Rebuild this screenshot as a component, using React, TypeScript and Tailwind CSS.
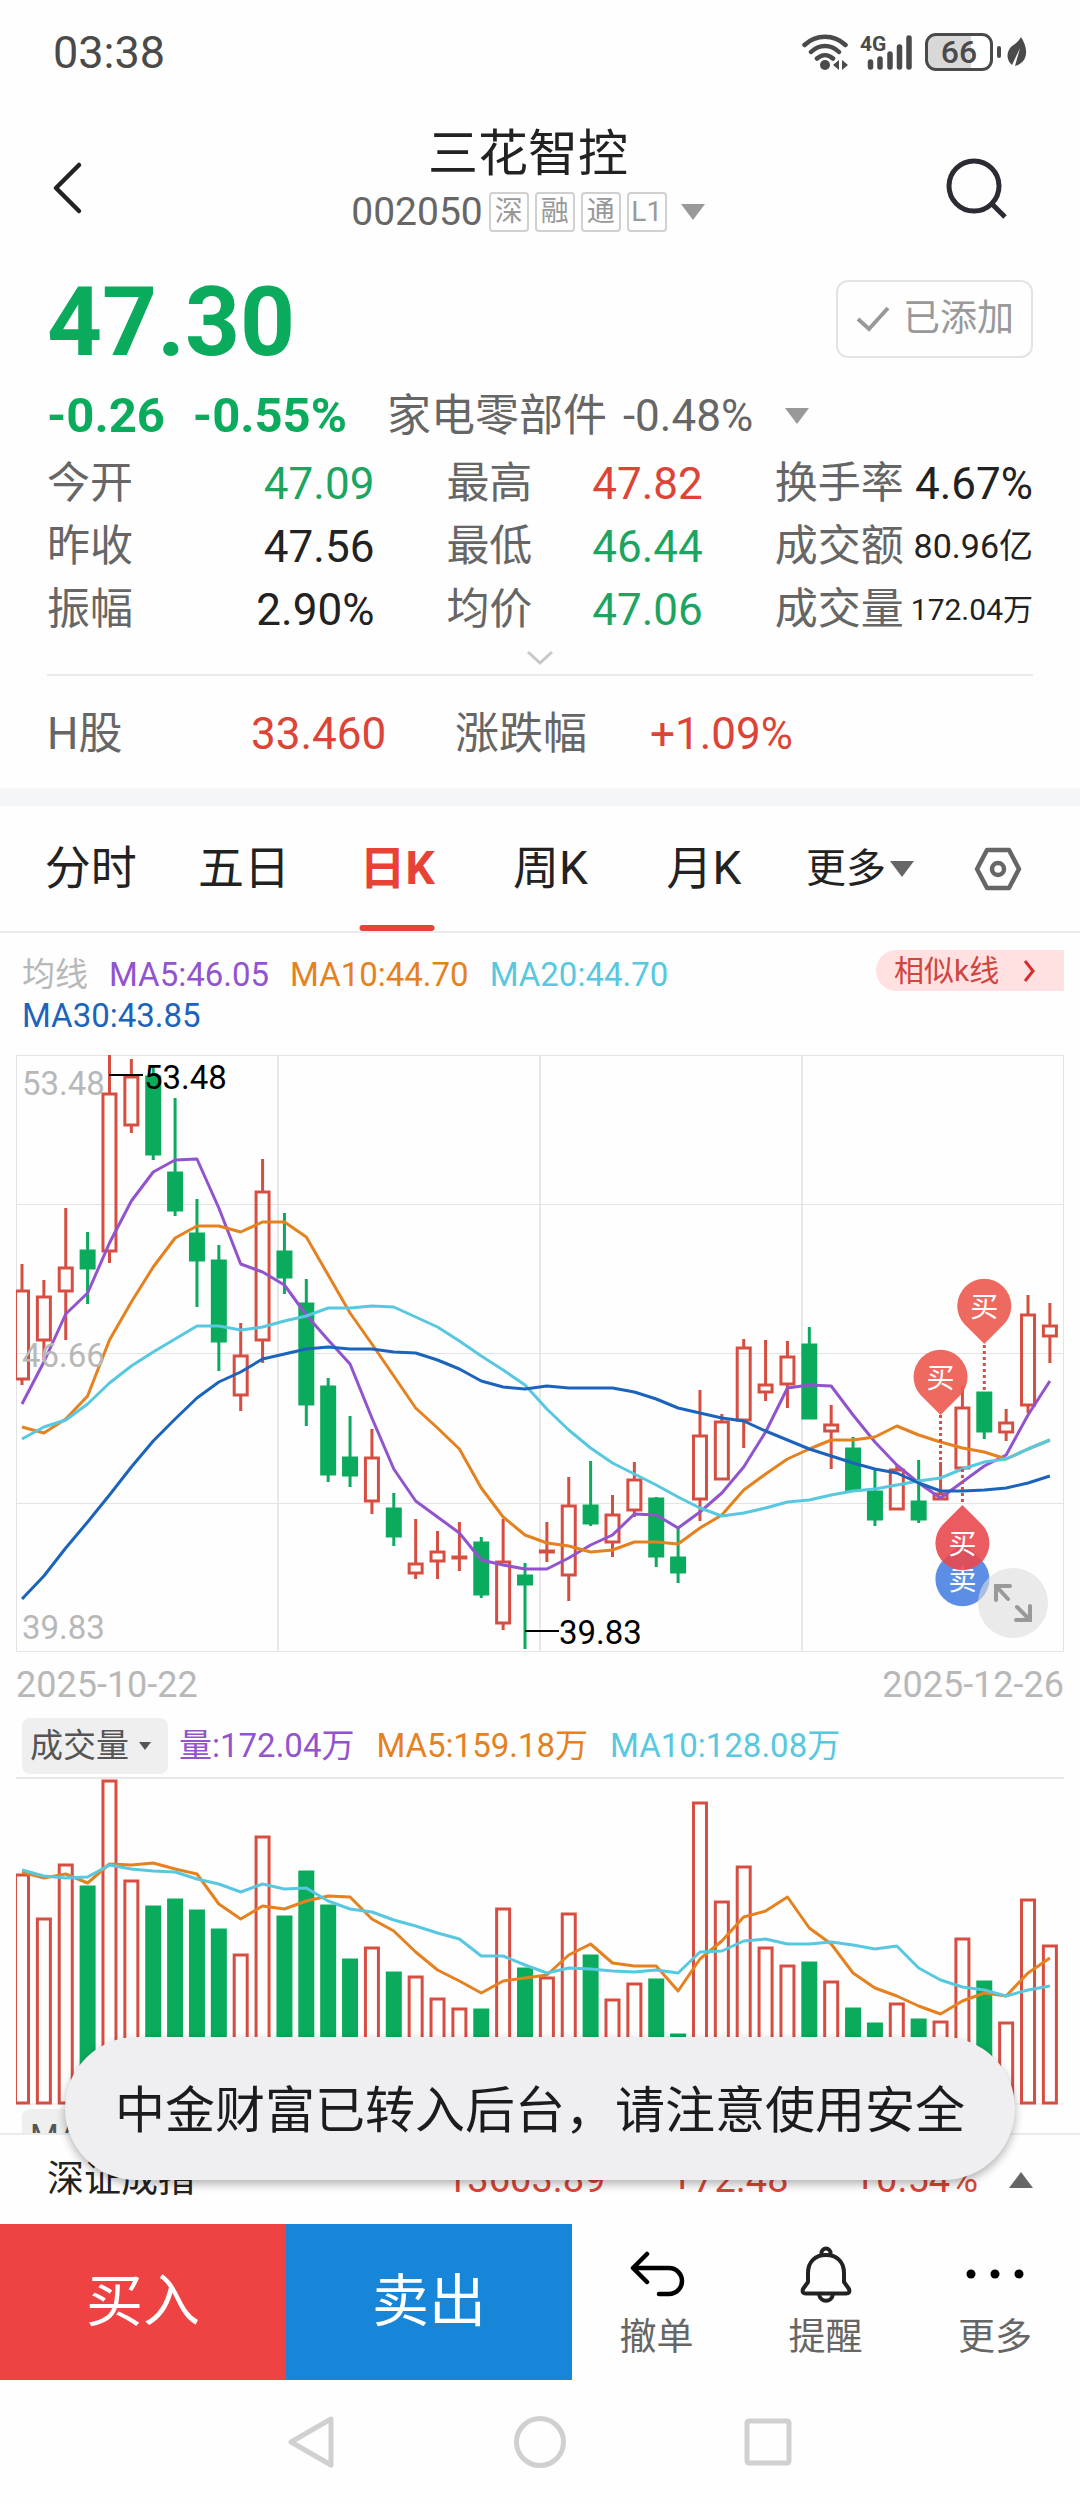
import React from "react";

// one trading day on the price chart: [high, body top, body bottom, low, rising]
type Candle = [number, number, number, number, 0 | 1];

const STEP = 21.87;
const xAt = (i: number) => 6 + i * STEP;

const candles: Candle[] = [
  [209, 235, 324, 330, 1], [225, 241, 285, 305, 1], [153, 212, 236, 285, 1], [177, 195, 213, 249, 0],
  [0, 38, 196, 208, 1], [4, 21, 70, 78, 1], [11, 21, 99, 105, 0], [43, 117, 155, 161, 0],
  [144, 178, 205, 252, 0], [190, 205, 286, 316, 0], [268, 300, 340, 356, 1], [104, 136, 285, 308, 1],
  [158, 196, 222, 239, 0], [224, 248, 349, 371, 0], [323, 331, 419, 427, 0], [361, 402, 420, 432, 0],
  [374, 402, 446, 459, 1], [438, 453, 481, 491, 0], [464, 508, 518, 524, 1], [476, 496, 506, 524, 1],
  [467, 501, 502, 516, 1], [482, 487, 539, 543, 0], [464, 506, 568, 575, 1], [508, 520, 529, 594, 0],
  [467, 495, 496, 507, 1], [422, 450, 520, 546, 1], [406, 450, 468, 471, 0], [440, 459, 487, 502, 1],
  [407, 424, 455, 462, 1], [442, 443, 501, 512, 0], [473, 502, 517, 528, 0], [335, 380, 444, 466, 1],
  [359, 366, 424, 424, 1], [284, 292, 365, 393, 1], [285, 329, 337, 346, 1], [286, 301, 329, 353, 1],
  [272, 289, 363, 364, 0], [350, 369, 376, 414, 1], [382, 393, 435, 435, 0], [413, 436, 464, 471, 0],
  [410, 414, 454, 455, 1], [405, 446, 464, 468, 0], [407, 438, 444, 444, 1], [331, 352, 413, 413, 1],
  [337, 337, 376, 384, 0], [354, 367, 377, 386, 1], [240, 259, 350, 358, 1], [248, 270, 281, 308, 1],
];

const ma5 = [349, 307, 259, 238, 188, 146, 117, 105, 104, 153, 209, 217, 230, 260, 285, 309, 363, 414, 446, 462, 478, 505, 510, 514, 514, 503, 490, 480, 459, 460, 473, 457, 438, 412, 377, 333, 330, 331, 360, 387, 410, 428, 443, 427, 411, 400, 360, 326];
const ma10 = [372, 378, 364, 341, 285, 247, 212, 183, 171, 171, 177, 167, 167, 182, 220, 258, 289, 321, 353, 373, 394, 433, 462, 480, 488, 491, 497, 495, 487, 487, 489, 473, 460, 435, 419, 404, 394, 385, 385, 382, 371, 380, 387, 393, 397, 404, 394, 385];
const ma20 = [384, 372, 365, 349, 328, 311, 297, 284, 271, 271, 275, 272, 266, 261, 253, 253, 251, 252, 262, 272, 286, 301, 315, 330, 354, 375, 393, 408, 419, 430, 442, 453, 461, 458, 453, 447, 445, 440, 436, 434, 430, 426, 423, 414, 407, 404, 394, 385];
const ma30 = [544, 521, 493, 467, 440, 412, 386, 364, 343, 327, 317, 304, 299, 294, 292, 294, 294, 297, 298, 305, 314, 326, 332, 334, 331, 333, 333, 333, 337, 344, 353, 358, 363, 366, 376, 385, 394, 401, 408, 414, 418, 428, 436, 436, 435, 433, 428, 421];

const volumes = [97, 141, 87, 109, 3, 103, 129, 122, 133, 152, 177, 59, 139, 94, 128, 182, 170, 195, 199, 221, 231, 232, 131, 191, 200, 136, 178, 222, 206, 202, 257, 25, 124, 89, 170, 188, 185, 204, 231, 246, 226, 242, 244, 161, 204, 245, 122, 168];
const volMa5 = [95, 101, 97, 106, 87, 88, 86, 92, 97, 127, 142, 129, 132, 124, 119, 120, 142, 154, 175, 193, 204, 216, 204, 201, 198, 178, 167, 186, 189, 189, 214, 182, 164, 140, 134, 120, 151, 167, 196, 211, 219, 229, 237, 224, 216, 219, 196, 181];
const volMa10 = [93, 99, 101, 100, 88, 92, 94, 95, 102, 107, 115, 107, 112, 111, 124, 132, 135, 143, 149, 156, 162, 179, 179, 188, 196, 191, 192, 194, 195, 193, 196, 175, 174, 164, 162, 167, 167, 165, 168, 172, 169, 191, 203, 210, 213, 219, 213, 209];

const RED = "#d64e41";
const GREEN = "#0aab5c";

const toPoints = (ys: number[]) => ys.map((y, i) => `${xAt(i)},${y}`).join(" ");

function Line({ ys, color }: { ys: number[]; color: string }) {
  return <polyline points={toPoints(ys)} fill="none" stroke={color} strokeWidth="3" strokeLinejoin="round" />;
}

function Pin({ day, y, label, color, up = false }: { day: number; y: number; label: string; color: string; up?: boolean }) {
  const x = xAt(day);
  const d = up
    ? `M${x} ${y - 38} L${x + 20} ${y - 18} A27 27 0 1 1 ${x - 20} ${y - 18} Z`
    : `M${x} ${y + 38} L${x + 20} ${y + 18} A27 27 0 1 0 ${x - 20} ${y + 18} Z`;
  return (
    <g>
      <path d={d} fill={color} opacity="0.9" />
      <text x={x} y={y + 11} fontSize="28" fill="#fff" textAnchor="middle">{label}</text>
    </g>
  );
}

function PriceChart() {
  return (
    <svg viewBox="0 0 1048 597" className="block w-full" role="img" aria-label="日K">
      <g stroke="#e4e4e4" strokeWidth="1" shapeRendering="crispEdges">
        <rect x="0.5" y="0.5" width="1047" height="596" fill="none" />
        {[149, 298, 448].map((y) => <line key={y} x1="0" x2="1048" y1={y} y2={y} />)}
        {[262, 524, 786].map((x) => <line key={x} x1={x} x2={x} y1="0" y2="597" stroke="#e8e8e8" strokeWidth="2" />)}
      </g>
      {candles.map(([high, top, bottom, low, up], i) => (
        <g key={i} stroke={up ? RED : GREEN} strokeWidth="3">
          <line x1={xAt(i)} x2={xAt(i)} y1={high} y2={top} />
          <line x1={xAt(i)} x2={xAt(i)} y1={bottom} y2={low} />
          <rect x={xAt(i) - 6.5} y={top + 1} width="13" height={Math.max(bottom - top - 1, 1)} fill={up ? "none" : GREEN} />
        </g>
      ))}
      <Line ys={ma5} color="#9254ce" />
      <Line ys={ma10} color="#e5811f" />
      <Line ys={ma20} color="#58c8e0" />
      <Line ys={ma30} color="#1c64bb" />
      <g fontSize="33" fill="#b8b8b8">
        <text x="6" y="40">53.48</text>
        <text x="6" y="312">46.66</text>
        <text x="6" y="584">39.83</text>
      </g>
      <g fontSize="33" fill="#000">
        <path d="M93 20H127M509 576H543" stroke="#000" strokeWidth="2" />
        <text x="128" y="34">53.48</text>
        <text x="543" y="589">39.83</text>
      </g>
      <g stroke={RED} strokeWidth="3" strokeDasharray="3 3">
        <line x1={xAt(42)} x2={xAt(42)} y1="360" y2="407" />
        <line x1={xAt(44)} x2={xAt(44)} y1="290" y2="337" />
        <line x1={xAt(43)} x2={xAt(43)} y1="414" y2="450" />
      </g>
      <Pin day={42} y={322} label="买" color="#ec5a50" />
      <Pin day={44} y={251} label="买" color="#ec5a50" />
      <Pin day={43} y={524} label="卖" color="#4b82e2" up />
      <Pin day={43} y={488} label="买" color="#e84a4e" up />
    </svg>
  );
}

function VolumeChart() {
  return (
    <svg viewBox="0 0 1048 328" className="block w-full" role="img" aria-label="成交量">
      <path d="M0 1H1048" stroke="#e8e8e8" strokeWidth="2" />
      <path d="M0 327H1048" stroke="#e8e8e8" strokeWidth="1" />
      {volumes.map((top, i) => {
        const up = candles[i][4];
        return (
          <rect key={i} x={xAt(i) - 6.5} y={top + 1} width="13" height={325 - top} fill={up ? "none" : GREEN} stroke={up ? RED : GREEN} strokeWidth="3" />
        );
      })}
      <Line ys={volMa5} color="#e5811f" />
      <Line ys={volMa10} color="#58c8e0" />
    </svg>
  );
}

function Caret({ className, up = false }: { className: string; up?: boolean }) {
  return (
    <svg viewBox="0 0 24 16" className={className} fill="currentColor" aria-hidden="true">
      <path d={up ? "M12 0L24 16H0Z" : "M0 0H24L12 16Z"} />
    </svg>
  );
}

function StatusBar() {
  return (
    <div className="flex h-[104px] items-center justify-between pl-[53px] pr-[53px] text-[#4a4a4a]">
      <span className="text-[45px] leading-none">03:38</span>
      <div className="flex items-center">
        <svg viewBox="0 0 46 36" className="h-9 w-[46px]" fill="none" stroke="currentColor" strokeWidth="4.5" strokeLinecap="round">
          <path d="M2.5 11C14 0 32 0 43.5 11M9 18C17 10 29 10 37 18M15 24.5C20 20 26 20 31 24.5" />
          <circle cx="23" cy="31" r="5" fill="currentColor" stroke="none" />
          <path d="M31 31L37 26V36ZM46 31L40 26V36Z" fill="currentColor" stroke="none" />
        </svg>
        <svg viewBox="0 0 54 36" className="ml-3 h-9 w-[54px] overflow-visible" fill="none" stroke="currentColor" strokeWidth="5.5" strokeLinecap="round">
          <path d="M10.5 28V33M20 25V33M30 20V33M39.5 13V33M49 4V33" />
          <text x="0" y="17" fontSize="21" fontWeight="700" fill="currentColor" stroke="none">4G</text>
        </svg>
        <div className="ml-[11px] flex h-[38px] w-[68px] items-center justify-center rounded-[11px] border-3 border-[#4a4a4a] bg-linear-to-r from-[#d8d8d8] from-70% to-white to-70% text-[32px] font-medium leading-none">
          66
        </div>
        <div className="ml-1 h-3 w-1 rounded-full bg-[#4a4a4a]" />
        <svg viewBox="0 0 20 30" className="ml-1.5 h-[30px] w-5" fill="currentColor">
          <path d="M14 0C19 8 21 16 17 23C14 27 11 28 8 29L13 11L5 28C-1 23 -1 14 5 9C9 6 12 4 14 0Z" />
        </svg>
      </div>
    </div>
  );
}

function Header() {
  return (
    <header className="flex items-end pl-12 pr-[72px] pt-[18px]">
      <button type="button" aria-label="返回" className="flex h-[88px] w-16 items-center">
        <svg viewBox="0 0 40 56" className="h-14 w-10" fill="none" stroke="#222" strokeWidth="4.5" strokeLinecap="round" strokeLinejoin="round">
          <path d="M31 5L8 28L31 51" />
        </svg>
      </button>
      <div className="flex flex-1 flex-col items-center">
        <h1 className="text-[50px] leading-[64px] text-[#222]">三花智控</h1>
        <div className="mt-1.5 flex h-10 items-center gap-1.5 text-[#666]">
          <span className="text-[39px] leading-10">002050</span>
          {["深", "融", "通", "L1"].map((tag) => (
            <span key={tag} className="flex h-10 w-10 items-center justify-center rounded-sm border-2 border-[#d0d0d0] text-[28px] leading-none text-[#999]">
              {tag}
            </span>
          ))}
          <Caret className="ml-2 h-4 w-6 text-[#999]" />
        </div>
      </div>
      <button type="button" aria-label="搜索" className="flex h-[88px] w-16 items-center">
        <svg viewBox="0 0 64 64" className="h-16 w-16" fill="none" stroke="#2a2b33" strokeWidth="5">
          <circle cx="30" cy="30" r="25" />
          <path d="M47 47L61 61" />
        </svg>
      </button>
    </header>
  );
}

const stats = [
  { label: "今开", value: "47.09", style: "text-[44px] text-[#1ba561]" },
  { label: "最高", value: "47.82", style: "text-[44px] text-[#dc4437]" },
  { label: "换手率", value: "4.67%", style: "text-[44px] text-[#222]" },
  { label: "昨收", value: "47.56", style: "text-[44px] text-[#222]" },
  { label: "最低", value: "46.44", style: "text-[44px] text-[#1ba561]" },
  { label: "成交额", value: "80.96亿", style: "text-[34px] text-[#222]" },
  { label: "振幅", value: "2.90%", style: "text-[44px] text-[#222]" },
  { label: "均价", value: "47.06", style: "text-[44px] text-[#1ba561]" },
  { label: "成交量", value: "172.04万", style: "text-[30px] text-[#222]" },
];

function Quote() {
  return (
    <section className="px-[47px] pt-12">
      <div className="flex h-[78px] items-center justify-between">
        <strong className="pt-1.5 text-[96px] font-bold leading-none text-[#0aab5c]">47.30</strong>
        <button type="button" className="flex h-[78px] items-center gap-3 rounded-xl border-2 border-[#e4e4e4] px-[17px] text-[37px] text-[#999]">
          <svg viewBox="0 0 36 28" className="h-7 w-9" fill="none" stroke="currentColor" strokeWidth="4">
            <path d="M3 14L14 24L33 3" />
          </svg>
          已添加
        </button>
      </div>
      <div className="mt-[30px] flex h-14 items-center whitespace-nowrap">
        <span className="text-[49px] font-bold text-[#0aab5c]">-0.26</span>
        <span className="ml-7 text-[49px] font-bold text-[#0aab5c]">-0.55%</span>
        <span className="ml-10 text-[44px] text-[#666]">家电零部件</span>
        <span className="ml-4 text-[44px] text-[#666]">-0.48%</span>
        <Caret className="ml-8 h-4 w-6 text-[#999]" />
      </div>
      <dl className="mt-2 grid grid-cols-[327fr_256fr_258fr] gap-x-[72px]">
        {stats.map((s) => (
          <div key={s.label} className="flex h-[63px] items-center justify-between whitespace-nowrap">
            <dt className="text-[43px] text-[#666]">{s.label}</dt>
            <dd className={s.style}>{s.value}</dd>
          </div>
        ))}
      </dl>
      <button type="button" aria-label="展开" className="flex h-[35px] w-full items-center justify-center border-b-2 border-[#ebebeb]">
        <svg viewBox="0 0 28 16" className="h-4 w-7" fill="none" stroke="#c8c8c8" strokeWidth="3">
          <path d="M2 2L14 13L26 2" />
        </svg>
      </button>
      <div className="flex h-28 items-center pt-1 text-[44px] text-[#666]">
        <span className="w-[204px]">H股</span>
        <span className="w-[204px] text-[#dc4437]">33.460</span>
        <span className="w-[195px]">涨跌幅</span>
        <span className="text-[#dc4437]">+1.09%</span>
      </div>
    </section>
  );
}

function Tabs() {
  return (
    <nav className="grid h-[127px] grid-cols-[153fr_153fr_153fr_153fr_153fr_159fr_116fr] border-b-2 border-[#ebebeb] pl-3.5 pr-6 text-[46px] text-[#222]">
      <button type="button">分时</button>
      <button type="button">五日</button>
      <button type="button" className="relative font-bold text-[#e64236]">
        日K
        <span className="absolute bottom-0 left-1/2 h-1.5 w-[75px] -translate-x-1/2 rounded-full bg-[#e64236]" />
      </button>
      <button type="button">周K</button>
      <button type="button">月K</button>
      <button type="button" className="flex items-center justify-center gap-1 text-[40px]">
        更多
        <Caret className="h-4 w-6 text-[#666]" />
      </button>
      <button type="button" aria-label="设置" className="flex items-center justify-center">
        <svg viewBox="0 0 48 44" className="h-11 w-12" fill="none" stroke="#666" strokeWidth="4.5" strokeLinejoin="round">
          <path d="M13 3H35L45 22L35 41H13L3 22Z" />
          <circle cx="24" cy="22" r="6" />
        </svg>
      </button>
    </nav>
  );
}

function Charts() {
  return (
    <section className="px-4 pt-[17px]">
      <div className="flex items-start">
        <div className="mt-1 flex flex-1 flex-wrap gap-x-[21px] pl-1.5 pr-7 text-[33px] leading-[41px]">
          <span className="text-[#b8b8b8]">均线</span>
          <span className="text-[#9254ce]">MA5:46.05</span>
          <span className="text-[#e5811f]">MA10:44.70</span>
          <span className="text-[#58c8e0]">MA20:44.70</span>
          <span className="text-[#1c64bb]">MA30:43.85</span>
        </div>
        <button type="button" className="flex h-[41px] w-[188px] items-center gap-6 rounded-l-full bg-[#ffe1e1] pl-[18px] text-[30px] text-[#cf4540]">
          相似k线
          <svg viewBox="0 0 12 24" className="h-6 w-3" fill="none" stroke="#d92d2d" strokeWidth="3">
            <path d="M2 2L10 12L2 22" />
          </svg>
        </button>
      </div>

      <div className="relative mt-[19px]">
        <PriceChart />
        <button type="button" aria-label="全屏" className="absolute bottom-3.5 right-4 h-[70px] w-[70px] rounded-full bg-[#dcdcdc]/60">
          <svg viewBox="0 0 70 70" className="h-full w-full" fill="none" stroke="#999" strokeWidth="4" strokeLinecap="round">
            <path d="M18 32V18H32M18 18L30 31M52 38V52H38M52 52L39 39" />
          </svg>
        </button>
      </div>
      <div className="flex h-[66px] items-center justify-between text-[36px] text-[#b8b8b8]">
        <span>2025-10-22</span>
        <span>2025-12-26</span>
      </div>

      <div className="mb-[3px] flex items-center pl-1.5 text-[33px]">
        <button type="button" className="flex h-14 w-[146px] items-center gap-2.5 rounded-lg bg-[#efefef] pl-2 text-[#555]">
          成交量
          <Caret className="h-2 w-3" />
        </button>
        <span className="ml-[11px] text-[#9254ce]">量:172.04万</span>
        <span className="ml-[22px] text-[#e5811f]">MA5:159.18万</span>
        <span className="ml-[22px] text-[#58c8e0]">MA10:128.08万</span>
      </div>
      <VolumeChart />
      <div className="mt-1 flex h-6 items-start overflow-hidden pl-1.5 text-[33px]">
        <button type="button" className="flex h-14 w-[146px] shrink-0 items-center gap-2.5 rounded-lg bg-[#efefef] pl-2 text-[#555]">
          MACD
          <Caret className="h-2 w-3" />
        </button>
      </div>
    </section>
  );
}

function IndexBar() {
  return (
    <div className="flex h-[91px] items-center border-t-2 border-[#ebebeb] px-[47px] text-[38px] text-[#dc4437]">
      <span className="flex-1 text-[37px] text-[#222]">深证成指</span>
      <div className="flex gap-[66px]">
        <span>13603.89</span>
        <span>+72.48</span>
        <span>+0.54%</span>
      </div>
      <Caret up className="ml-[31px] h-4 w-6 text-[#666]" />
    </div>
  );
}

function ActionBar() {
  const item = "flex flex-col items-center gap-2.5 pt-[21px] text-[37px] leading-[46px] text-[#666]";
  return (
    <div className="grid h-[156px] grid-cols-[286fr_286fr_169fr_169fr_170fr]">
      <button type="button" className="bg-[#ef4242] text-[57px] text-white">买入</button>
      <button type="button" className="bg-[#1886d8] text-[57px] text-white">卖出</button>
      <button type="button" className={item}>
        <svg viewBox="0 0 60 60" className="h-[60px] w-[60px]" fill="none" stroke="#000" strokeWidth="4.5" strokeLinecap="round" strokeLinejoin="round">
          <path d="M20 9L6 23L20 37M6 23H42A13 13 0 0 1 42 49H32" />
        </svg>
        撤单
      </button>
      <button type="button" className={item}>
        <svg viewBox="0 0 60 60" className="h-[60px] w-[60px]" fill="none" stroke="#222" strokeWidth="4" strokeLinejoin="round">
          <path d="M12 28C12 17 19 10 30 10S48 17 48 28V37L53 44C54 47 53 48.5 50 48.5H10C7 48.5 6 47 7 44L12 37Z" />
          <path d="M25.5 10V8A4.5 4.5 0 0 1 34.5 8V10M23 49C24 58 36 58 37 49" />
        </svg>
        提醒
      </button>
      <button type="button" className={item}>
        <svg viewBox="0 0 60 60" className="h-[60px] w-[60px]" fill="#000">
          <circle cx="6" cy="29" r="4.5" />
          <circle cx="30" cy="29" r="4.5" />
          <circle cx="54" cy="29" r="4.5" />
        </svg>
        更多
      </button>
    </div>
  );
}

function SystemNav() {
  return (
    <div className="flex h-[124px] items-center justify-center gap-[172px]">
      <button type="button" aria-label="后退">
        <svg viewBox="0 0 56 56" className="h-14 w-14" fill="none" stroke="#d0d0d0" strokeWidth="5" strokeLinejoin="round">
          <path d="M47 5V51L7 28Z" />
        </svg>
      </button>
      <button type="button" aria-label="主屏幕">
        <svg viewBox="0 0 56 56" className="h-14 w-14" fill="none" stroke="#d0d0d0" strokeWidth="5">
          <circle cx="28" cy="28" r="23.500" />
        </svg>
      </button>
      <button type="button" aria-label="最近任务">
        <svg viewBox="0 0 56 56" className="h-14 w-14" fill="none" stroke="#d0d0d0" strokeWidth="5">
          <rect x="7" y="7" width="42" height="42" rx="2" />
        </svg>
      </button>
    </div>
  );
}

export default function App() {
  return (
    <div className="relative min-h-screen bg-[#fefefe] font-['Roboto','Noto_Sans_CJK_SC',sans-serif]">
      <StatusBar />
      <Header />
      <Quote />
      <div className="h-[18px] bg-[#f5f6f8]" />
      <Tabs />
      <Charts />
      <IndexBar />
      <ActionBar />
      <SystemNav />

      {/* Toast */}
      <div role="status" className="absolute bottom-[324px] left-1/2 flex h-[143px] -translate-x-1/2 items-center whitespace-nowrap rounded-full bg-[#efeff1] px-[50px] pt-1.5 text-[50px] text-[#1a1c20] shadow-[0_4px_10px_rgba(0,0,0,0.3)]">
        中金财富已转入后台，请注意使用安全
      </div>
    </div>
  );
}
